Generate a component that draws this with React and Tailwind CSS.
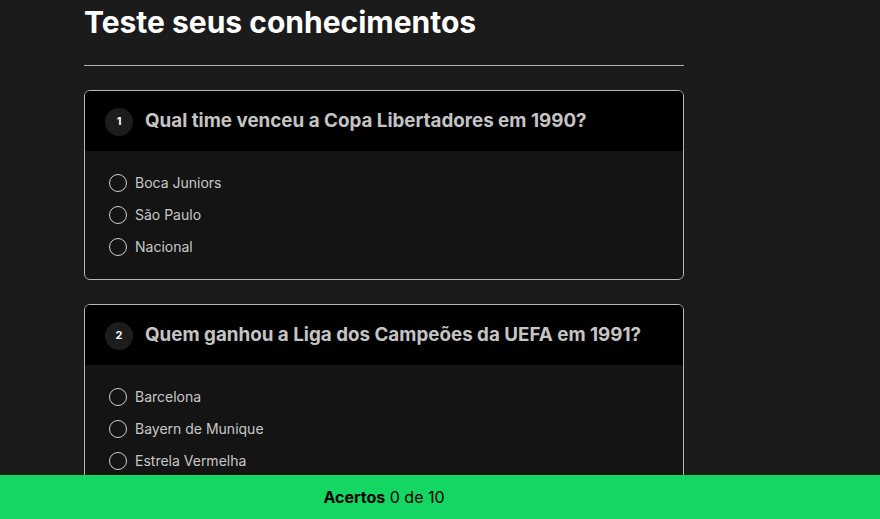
import React, { useState } from 'react';

const questions = [
  {
    id: 1,
    title: 'Qual time venceu a Copa Libertadores em 1990?',
    options: ['Boca Juniors', 'São Paulo', 'Nacional'],
  },
  {
    id: 2,
    title: 'Quem ganhou a Liga dos Campeões da UEFA em 1991?',
    options: ['Barcelona', 'Bayern de Munique', 'Estrela Vermelha'],
  },
];

function QuestionCard({ q, selected, onSelect }) {
  return (
    <div className="mb-6 rounded-md border border-[#b5b5b5] bg-[#141414] overflow-hidden">
      <div className="flex h-[60px] items-center gap-3 bg-black px-5 pt-px">
        <span className="flex h-7 w-7 items-center justify-center rounded-full bg-[#1c1c1c] text-[11px] font-bold text-white">
          {q.id}
        </span>
        <h2 className="text-[18.8px] font-bold text-[#c4c4c4]">{q.title}</h2>
      </div>
      <div className="flex flex-col gap-2 px-6 py-5">
        {q.options.map((opt) => (
          <label key={opt} className="flex h-6 cursor-pointer items-center gap-2 text-sm text-[#c8c8c8]">
            <span
              onClick={() => onSelect(opt)}
              className="flex h-[18px] w-[18px] items-center justify-center rounded-full border-[1.5px] border-[#cfcfcf]"
            >
              {selected === opt && <span className="h-2 w-2 rounded-full bg-[#cfcfcf]" />}
            </span>
            {opt}
          </label>
        ))}
      </div>
    </div>
  );
}

export default function App() {
  const [answers, setAnswers] = useState({});

  return (
    <div className="min-h-screen bg-[#1b1b1b] pb-16 font-['Inter',sans-serif]">
      <div className="ml-[84px] w-[600px] pt-1">
        <h1 className="text-3xl font-bold text-white">Teste seus conhecimentos</h1>
        <hr className="mt-[25px] mb-6 border-t border-[#b0b0b0]" />
        {questions.map((q) => (
          <QuestionCard
            key={q.id}
            q={q}
            selected={answers[q.id]}
            onSelect={(opt) => setAnswers({ ...answers, [q.id]: opt })}
          />
        ))}
      </div>
      <div className="fixed bottom-0 left-0 right-0 h-11 bg-[#14d662]">
        <div className="ml-[84px] flex h-full w-[600px] items-center justify-center text-base text-black">
          <span className="font-bold">Acertos</span>&nbsp;0 de 10
        </div>
      </div>
    </div>
  );
}
